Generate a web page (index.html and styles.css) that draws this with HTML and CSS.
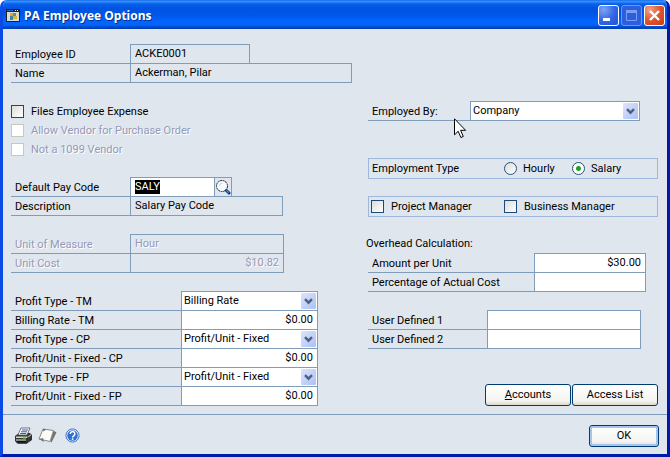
FILE: index.html
```html
<!DOCTYPE html>
<html lang="en">
<head>
<meta charset="utf-8">
<title>PA Employee Options</title>
<link rel="stylesheet" href="styles.css">
</head>
<body>
<svg class="defs" width="0" height="0" aria-hidden="true">
  <defs>
    <linearGradient id="arrow-face" x1="0" y1="0" x2="1" y2="1">
      <stop offset="0" stop-color="#dbe5fd"/><stop offset="1" stop-color="#acc0f3"/>
    </linearGradient>
    <symbol id="arrow" viewBox="0 0 15 16">
      <rect width="15" height="16" rx="1" fill="url(#arrow-face)"/>
      <path d="M4 6.2 7.5 9.7 11 6.2" fill="none" stroke="#4d6185" stroke-width="2.4"/>
    </symbol>
  </defs>
</svg>
<div class="window">
  <header class="titlebar">
    <svg class="app-icon" width="14" height="13" viewBox="0 0 14 13" aria-hidden="true">
      <rect width="14" height="13" fill="#222"/>
      <rect x="1" y="3" width="12" height="9" fill="#d9dcd4"/>
      <path d="M1 1h6v1H1z" fill="#245edb"/><path d="M9 1h1v1H9zM11 1h1v1h-1z" fill="#ddd"/>
      <path d="M4 4h3v3H4z" fill="#e3a52c"/><path d="M7 4h3v3H7z" fill="#4e8fb8"/>
      <path d="M4 7h3v4H4z" fill="#3b87a8"/><path d="M7 7h4v3H7z" fill="#d8b640"/>
    </svg>
    <h1 class="title">PA Employee Options</h1>
    <div class="caption">
      <button class="cap" aria-label="Minimize"><svg width="19" height="19" viewBox="0 0 19 19"><path d="M4 12h7v3H4z" fill="#fff"/></svg></button>
      <button class="cap cap-off" aria-label="Maximize" disabled><svg width="19" height="19" viewBox="0 0 19 19"><path d="M4.500 5.500h10v9h-10z" fill="none" stroke="#7c9df0"/><path d="M4 4h11v3H4z" fill="#7c9df0"/></svg></button>
      <button class="cap cap-close" aria-label="Close"><svg width="19" height="19" viewBox="0 0 19 19"><path d="M5 5l9 9M14 5l-9 9" stroke="#fff" stroke-width="2.400"/></svg></button>
    </div>
  </header>
  <main class="content">
    <div class="col">
      <div class="group">
        <div class="row"><label for="eid">Employee ID</label><input id="eid" class="value w-id" value="ACKE0001" readonly></div>
        <div class="row"><label for="name">Name</label><input id="name" class="value w-name" value="Ackerman, Pilar" readonly></div>
      </div>
      <div class="group checks">
        <label class="check"><input type="checkbox">Files Employee Expense</label>
        <label class="check off"><input type="checkbox" disabled>Allow Vendor for Purchase Order</label>
        <label class="check off"><input type="checkbox" disabled>Not a 1099 Vendor</label>
      </div>
      <div class="group">
        <div class="row"><label for="code">Default Pay Code</label><input id="code" class="value edit w-code" value="SALY"><button class="lookup" aria-label="Lookup"><svg width="16" height="18" viewBox="0 0 16 18"><circle cx="7" cy="8" r="5.500" fill="#f8fbfd" stroke="#222" stroke-width="1" stroke-dasharray="2 .6"/><path d="M4.500 8a3 3 0 0 1 3-3" fill="none" stroke="#c7d3e0"/><path d="M11.500 12.500l2.500 2.500" stroke="#10286e" stroke-width="3" stroke-linecap="round"/><path d="M11.500 12l2.500 3" stroke="#3e8fe8" stroke-width="1.200"/></svg></button></div>
        <div class="row"><label for="desc">Description</label><input id="desc" class="value w-desc" value="Salary Pay Code" readonly></div>
      </div>
      <div class="group">
        <div class="row off"><label for="uom">Unit of Measure</label><input id="uom" class="value w-unit" value="Hour" disabled></div>
        <div class="row off"><label for="cost">Unit Cost</label><input id="cost" class="value num w-unit" value="$10.82" disabled></div>
      </div>
      <div class="group profit">
        <div class="row"><label for="ptm">Profit Type - TM</label><span class="pick"><select id="ptm"><option>Billing Rate</option></select><svg class="arrow" width="15" height="16"><use href="#arrow"/></svg></span></div>
        <div class="row"><label for="btm">Billing Rate - TM</label><input id="btm" class="value edit num" value="$0.00"></div>
        <div class="row"><label for="pcp">Profit Type - CP</label><span class="pick"><select id="pcp"><option>Profit/Unit - Fixed</option></select><svg class="arrow" width="15" height="16"><use href="#arrow"/></svg></span></div>
        <div class="row"><label for="ucp">Profit/Unit - Fixed - CP</label><input id="ucp" class="value edit num" value="$0.00"></div>
        <div class="row"><label for="pfp">Profit Type - FP</label><span class="pick"><select id="pfp"><option>Profit/Unit - Fixed</option></select><svg class="arrow" width="15" height="16"><use href="#arrow"/></svg></span></div>
        <div class="row"><label for="ufp">Profit/Unit - Fixed - FP</label><input id="ufp" class="value edit num" value="$0.00"></div>
      </div>
    </div>
    <div class="col col-right">
      <div class="group employed">
        <div class="row"><label for="emp">Employed By:</label><span class="pick"><select id="emp"><option>Company</option></select><svg class="arrow" width="15" height="16"><use href="#arrow"/></svg></span></div>
        <svg class="pointer" width="13" height="21" viewBox="0 0 13 21" aria-hidden="true"><path d="M.5.8v16l3.700-3.500 2.700 6.200 2.400-1-2.700-6.200h5z" fill="#fff" stroke="#000"/></svg>
      </div>
      <div class="frame" role="radiogroup" aria-labelledby="etype">
        <span id="etype" class="frame-title">Employment Type</span>
        <label class="radio"><input type="radio" name="etype">Hourly</label>
        <label class="radio"><input type="radio" name="etype" checked>Salary</label>
      </div>
      <div class="frame managers">
        <label class="check"><input type="checkbox">Project Manager</label>
        <label class="check"><input type="checkbox">Business Manager</label>
      </div>
      <div class="group overhead">
        <h2 class="heading">Overhead Calculation:</h2>
        <div class="row"><label for="amt">Amount per Unit</label><input id="amt" class="value edit num" value="$30.00"></div>
        <div class="row"><label for="pct">Percentage of Actual Cost</label><input id="pct" class="value edit num" value=""></div>
      </div>
      <div class="group user">
        <div class="row"><label for="ud1">User Defined 1</label><input id="ud1" class="value edit"></div>
        <div class="row"><label for="ud2">User Defined 2</label><input id="ud2" class="value edit"></div>
      </div>
      <div class="actions">
        <button class="btn"><u>A</u>ccounts</button>
        <button class="btn">Access List</button>
      </div>
    </div>
  </main>
  <footer class="footer">
    <button class="tool" aria-label="Print"><svg width="19" height="17" viewBox="0 0 19 17">
      <path d="M1 9l4-3h11l2 2v5l-5 3.500H3L1 14z" fill="#333"/>
      <path d="M2 9.500h11v1.500H2z" fill="#d6d6ce"/><path d="M2 12h10v2H2z" fill="#8c8c86"/><path d="M13.500 9.500L17 7v1.500l-3.500 2.500z" fill="#aaa"/><path d="M9 10.500h3v2H9z" fill="#25b52b"/>
      <path d="M7 1h9l-3 7H4z" fill="#fff" stroke="#555" stroke-width=".8"/>
      <path d="M8 3h6M7 4.800h6M6.200 6.500h6" stroke="#2a5eb8" stroke-width="1"/>
      <path d="M3 14.500h9M4 16h9" stroke="#111"/></svg></button>
    <button class="tool" aria-label="Note"><svg width="19" height="17" viewBox="0 0 19 17">
      <path d="M15.500 3.500l3 2-5 10L12 14z" fill="#77756a"/><path d="M5 2l10.500 1.500L12 14.500 1 12z" fill="#fdfdf8" stroke="#8a8a82"/>
      <path d="M1 12l4-1 1 4z" fill="#777"/><path d="M5 2l3 .5-2.500 2z" fill="#666"/></svg></button>
    <button class="tool" aria-label="Help"><svg width="15" height="15" viewBox="0 0 15 15">
      <circle cx="7.500" cy="7.500" r="6.600" fill="#dce9fb" stroke="#4a78bd"/><circle cx="7.500" cy="7.500" r="5.200" fill="#2f6fd0"/>
      <path d="M5.200 6a2.300 2.300 0 1 1 3.500 1.900c-.8.500-1.100.8-1.100 1.600" fill="none" stroke="#fff" stroke-width="1.500"/><path d="M6.800 10.300h1.600v1.600H6.800z" fill="#fff"/></svg></button>
    <button class="btn ok">OK</button>
  </footer>
</div>
<script src="main.js"></script>
</body>
</html>
```
FILE: styles.css
```css
* { box-sizing: border-box; }
body {
  margin: 0;
  background: #fff;
  color: #000;
  font: 11px/14px Roboto, "Liberation Sans", sans-serif;
}
input, select, button { font: inherit; color: inherit; margin: 0; border-radius: 0; }
.defs { position: absolute; }
.window {
  min-height: 100vh;
  display: flex;
  flex-direction: column;
  background: #dfe6ee;
  border: 3px solid;
  border-color: #0855dd #0019a8 #0019a8 #0a4be8;
  border-top: 0;
  border-radius: 7px 7px 0 0;
  overflow: hidden;
}
.titlebar {
  height: 29px;
  margin: 0 -3px;
  padding: 2px 5px 0 6px;
  display: flex;
  align-items: center;
  background: linear-gradient(#0a5ae0 0, #3c96ff 1px, #2a86fa 2px, #0860e8 4px, #0054e3 8px, #0055e6 14px, #0066ff 22px, #0064fa 25px, #0048c8 27px, #003cb0 29px);
}
.title {
  flex: 1;
  margin: 0 0 0 4px;
  color: #fff;
  font: bold 12px/18px "Open Sans", "Noto Sans", sans-serif;
  text-shadow: 1px 1px #0b2f8c;
}
.caption { display: flex; gap: 2px; }
.cap {
  width: 21px;
  height: 21px;
  padding: 0;
  border: 1px solid #fff;
  border-radius: 3px;
  background: radial-gradient(circle at 25% 20%, #7ea4f4, #3568e4 50%, #1f52d8);
}
.cap svg { display: block; }
.cap-off { border-color: #6f97ef; background: #2c5fdf; }
.cap-close { background: radial-gradient(circle at 25% 20%, #f0a287, #e0552f 50%, #c93d12); }
.content {
  flex: 1;
  display: grid;
  grid-template-columns: 357fr 290fr;
  padding: 15px 9px 8px 8px;
  border-bottom: 1px solid #7f9db9;
}
.col { display: flex; flex-direction: column; gap: 18px; }
.row { display: flex; height: 20px; }
.row + .row { margin-top: -1px; }
.row label {
  flex: 0 0 119px;
  padding: 4px 0 0 4px;
  border-bottom: 1px solid #7f9db9;
}
.value {
  min-width: 0;
  padding: 0 4px;
  border: 1px solid #7f9db9;
  background: transparent;
  outline: 0;
}
.edit { background: #fff; }
.num { text-align: right; }
.off, .off input { color: #9599b8; text-shadow: 1px 1px #fff; }
.w-id { width: 120px; }
.w-name { width: 222px; }
.w-code { width: 85px; }
.w-desc { width: 153px; }
.w-unit { width: 154px; }
.lookup {
  width: 18px;
  padding: 0;
  margin-left: -1px;
  border: 1px solid #7f9db9;
  background: transparent;
}
.lookup svg { display: block; }
::selection { background: #000; color: #fff; }
.checks { padding-top: 1px; }
.check, .radio { display: flex; align-items: center; height: 19px; gap: 7px; }
.check input {
  appearance: none;
  width: 13px;
  height: 13px;
  border: 1px solid #1c4a7c;
  background: linear-gradient(135deg, #dcdcd7, #fff);
}
.check input:disabled { border-color: #cac8bb; background: #fff; }
.profit .row label { flex-basis: 170px; }
.profit .value, .profit .pick { width: 137px; }
.pick { position: relative; display: flex; }
.pick select {
  appearance: none;
  width: 100%;
  padding: 0 18px 0 2px;
  border: 1px solid #7f9db9;
  background: #fff;
}
.arrow { position: absolute; top: 2px; right: 2px; pointer-events: none; }
.employed { position: relative; margin-top: 57px; }
.employed .row label { flex-basis: 102px; }
.employed .pick { width: 170px; }
.pointer { position: absolute; left: 86px; top: 17px; }
.frame {
  display: flex;
  align-items: center;
  height: 21px;
  padding: 0 2px;
  border: 1px solid #9db8dc;
}
.employed + .frame { margin-top: 19px; }
.frame-title { flex: 0 0 133px; padding-left: 1px; }
.radio { flex: 0 0 68px; gap: 6px; }
.radio input {
  appearance: none;
  width: 13px;
  height: 13px;
  border: 1px solid #2a527c;
  border-radius: 50%;
  background: linear-gradient(135deg, #dcdcd7, #fff);
}
.radio input:checked { background: radial-gradient(circle, #21a121 0 2px, #fff 3px); }
.managers .check { flex: 0 0 133px; }
.frame.managers { margin-top: -1px; }
.heading { margin: 0 0 0 -2px; font: inherit; line-height: 18px; }
.overhead .row label { flex-basis: 166px; }
.overhead .value { width: 112px; }
.user .row label { flex-basis: 119px; }
.user .value { width: 154px; }
.actions { display: flex; justify-content: flex-end; gap: 1px; margin-top: auto; }
.btn {
  width: 86px;
  height: 22px;
  padding: 0;
  border: 1px solid #003c74;
  border-radius: 3px;
  background: linear-gradient(#fff, #f3f3ef 80%, #dcd8cc);
}
.footer {
  display: flex;
  align-items: center;
  gap: 5px;
  height: 39px;
  padding: 2px 8px 0 11px;
}
.tool { padding: 0; border: 0; background: none; }
.tool svg { display: block; }
.tool:nth-child(3) { margin-left: 3px; }
.ok { width: 70px; margin-left: auto; box-shadow: inset 0 0 0 2px #a9c3f0; }
```
FILE: main.js
```js
const code = document.getElementById("code");
code.focus();
code.select();
```
